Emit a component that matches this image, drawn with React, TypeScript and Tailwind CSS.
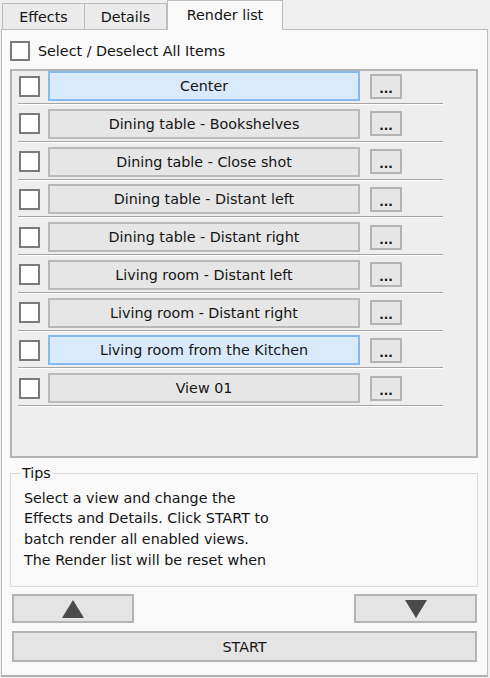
import React from "react";

const items = [
  { name: "Center", sel: true },
  { name: "Dining table - Bookshelves", sel: false },
  { name: "Dining table - Close shot", sel: false },
  { name: "Dining table - Distant left", sel: false },
  { name: "Dining table - Distant right", sel: false },
  { name: "Living room - Distant left", sel: false },
  { name: "Living room - Distant right", sel: false },
  { name: "Living room from the Kitchen", sel: true },
  { name: "View 01", sel: false },
];

function Check() {
  return <div className="w-[21px] h-[21px] shrink-0 border-2 border-[#7a7a7a] bg-white" />;
}

export default function App() {
  return (
    <div
      className="w-[490px] h-[678px] bg-[#efefef] text-[#141414] text-[14.3px] leading-[20px] overflow-hidden"
      style={{ fontFamily: '"DejaVu Sans", Verdana, sans-serif' }}
    >
      {/* Tabs */}
      <div className="flex items-end h-[29px] pl-[2px]">
        <div className="w-[83px] h-[26px] border border-b-0 border-[#bdbdbd] bg-[#ebebeb] flex items-center justify-center pt-[1px]">
          Effects
        </div>
        <div className="w-[82px] h-[26px] border border-l-0 border-b-0 border-[#bdbdbd] bg-[#ebebeb] flex items-center justify-center pt-[1px]">
          Details
        </div>
        <div className="relative z-10 -mb-px w-[116px] h-[30px] border border-b-0 border-[#bdbdbd] bg-[#f9f9f9] flex items-center justify-center pb-[1px]">
          Render list
        </div>
      </div>

      {/* Panel */}
      <div className="ml-px w-[487px] h-[648px] border border-[#bdbdbd] border-b-2 border-b-[#b0b0b0] bg-[#f9f9f9] pl-[8px]">
        {/* Select all */}
        <div className="flex items-center h-[20px] mt-[11px]">
          <div className="w-[20px] h-[20px] border-2 border-[#7a7a7a] bg-white" />
          <span className="ml-[8px]">Select / Deselect All Items</span>
        </div>

        {/* List */}
        <div className="mt-[8px] w-[468px] h-[389px] border-2 border-[#b3b3b3] bg-[#eeeeee] pl-[6px]">
          {items.map((it) => (
            <div key={it.name} className="h-[37.75px] flex flex-col">
              <div className="flex items-center h-[30px]">
                <div className="ml-[1px]">
                  <Check />
                </div>
                <div
                  className={
                    it.sel
                      ? "ml-[8px] w-[312px] h-[30px] border-2 border-[#86b9ec] bg-[#d9eafc] flex items-center justify-center"
                      : "ml-[8px] w-[312px] h-[30px] border-2 border-[#b9b9b9] bg-[#e6e6e6] flex items-center justify-center"
                  }
                >
                  {it.name}
                </div>
                <div className="ml-[10px] w-[32px] h-[25px] border-2 border-[#b3b3b3] bg-[#e6e6e6] flex items-center justify-center font-bold text-[12px] pt-[5px]">
                  ...
                </div>
              </div>
              <div className="mt-[2px] w-[425px] h-[2px] border-t border-[#a4a4a4] border-b border-b-white" />
            </div>
          ))}
        </div>

        {/* Tips */}
        <div className="relative mt-[15px] w-[468px] h-[114px] border border-[#dcdcdc] pl-[13px] pt-[13.5px] leading-[20.7px]">
          <div className="absolute left-[10px] top-[-11px] px-[1px] bg-[#f9f9f9] leading-[20px]">Tips</div>
          Select a view and change the
          <br />
          Effects and Details. Click START to
          <br />
          batch render all enabled views.
          <br />
          The Render list will be reset when
        </div>

        {/* Up / Down */}
        <div className="mt-[7px] ml-[2px] w-[465px] flex justify-between">
          <div className="w-[122px] h-[29px] border-2 border-[#b4b4b4] bg-[#e4e4e4] flex items-center justify-center">
            <svg width="22" height="18" viewBox="0 0 22 18">
              <polygon points="11,0 22,18 0,18" fill="#4a4a4a" />
            </svg>
          </div>
          <div className="w-[123px] h-[29px] border-2 border-[#b4b4b4] bg-[#e4e4e4] flex items-center justify-center">
            <svg width="22" height="18" viewBox="0 0 22 18">
              <polygon points="0,0 22,0 11,18" fill="#4a4a4a" />
            </svg>
          </div>
        </div>

        {/* Start */}
        <div className="mt-[8px] ml-[2px] w-[465px] h-[31px] border-2 border-[#b4b4b4] bg-[#e4e4e4] flex items-center justify-center">
          START
        </div>
      </div>
    </div>
  );
}
